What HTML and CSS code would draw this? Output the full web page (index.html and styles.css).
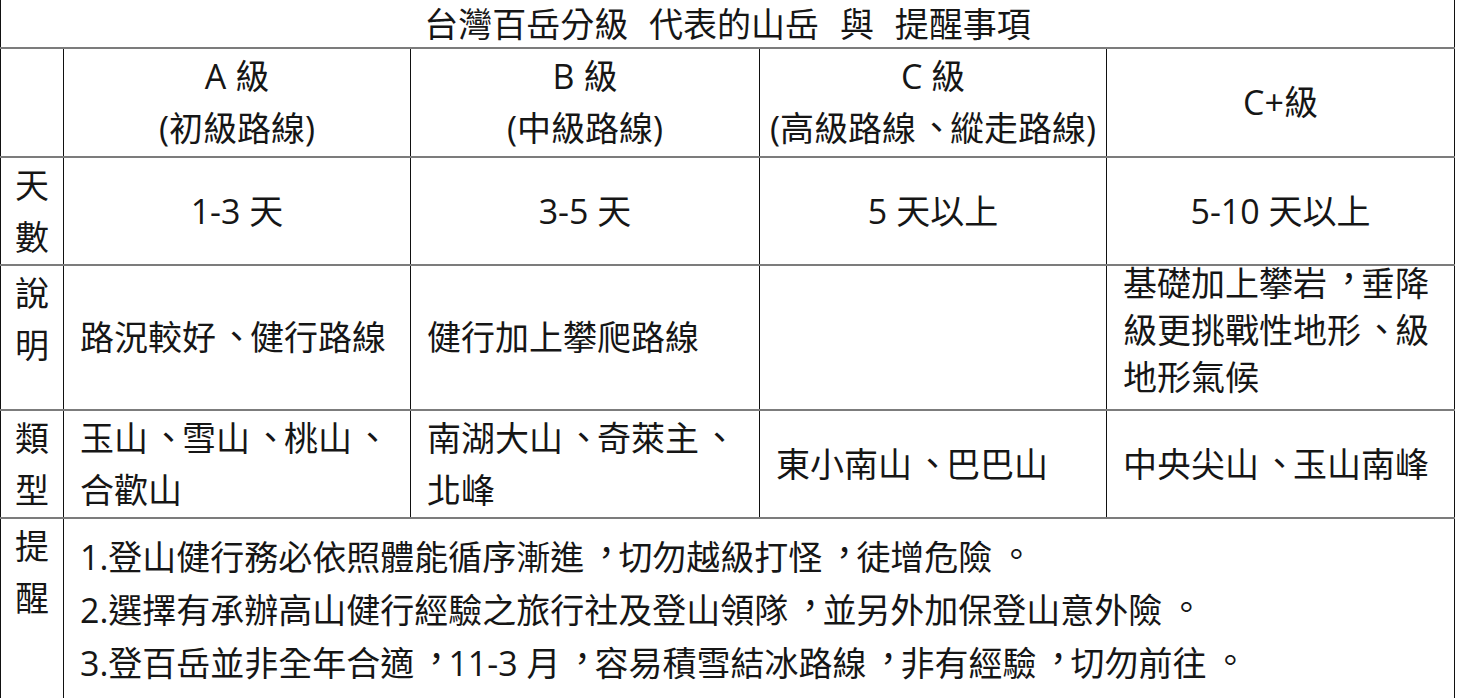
FILE: index.html
```html
<!DOCTYPE html>
<html lang="zh-TW">
<head>
<meta charset="utf-8">
<title>台灣百岳分級</title>
<link rel="stylesheet" href="styles.css">
</head>
<body>
<table class="grade-table">
  <colgroup>
    <col class="col-label">
    <col class="col-a">
    <col class="col-b">
    <col class="col-c">
    <col class="col-cp">
  </colgroup>
  <tr class="row-title">
    <td class="title" colspan="5">台灣百岳分級 代表的山岳 與 提醒事項</td>
  </tr>
  <tr class="row-head">
    <td class="label"></td>
    <td class="center">A 級<br>(初級路線)</td>
    <td class="center">B 級<br>(中級路線)</td>
    <td class="center">C 級<br>(高級路線<span class="dun">、</span>縱走路線)</td>
    <td class="center">C+級</td>
  </tr>
  <tr class="row-days">
    <td class="label">天<br>數</td>
    <td class="center">1-3 天</td>
    <td class="center">3-5 天</td>
    <td class="center">5 天以上</td>
    <td class="center">5-10 天以上</td>
  </tr>
  <tr class="row-desc">
    <td class="label">說<br>明</td>
    <td class="text">路況較好<span class="dun">、</span>健行路線</td>
    <td class="text">健行加上攀爬路線</td>
    <td class="text"></td>
    <td class="text tight"><div class="lift">基礎加上攀岩<span class="comma">，</span>垂降<br>級更挑戰性地形<span class="dun">、</span>級<br>地形氣候</div></td>
  </tr>
  <tr class="row-type">
    <td class="label">類<br>型</td>
    <td class="text">玉山<span class="dun">、</span>雪山<span class="dun">、</span>桃山<span class="dun">、</span><br>合歡山</td>
    <td class="text">南湖大山<span class="dun">、</span>奇萊主<span class="dun">、</span><br>北峰</td>
    <td class="text">東小南山<span class="dun">、</span>巴巴山</td>
    <td class="text">中央尖山<span class="dun">、</span>玉山南峰</td>
  </tr>
  <tr class="row-note">
    <td class="label">提<br>醒</td>
    <td class="notes" colspan="4">1.登山健行務必依照體能循序漸進<span class="comma">，</span>切勿越級打怪<span class="comma">，</span>徒增危險<span class="period">。</span><br>2.選擇有承辦高山健行經驗之旅行社及登山領隊<span class="comma">，</span>並另外加保登山意外險<span class="period">。</span><br>3.登百岳並非全年合適<span class="comma">，</span>11-3 月<span class="comma">，</span>容易積雪結冰路線<span class="comma">，</span>非有經驗<span class="comma">，</span>切勿前往<span class="period">。</span></td>
  </tr>
</table>
</body>
</html>
```

FILE: styles.css
```css
html, body {
  margin: 0;
  padding: 0;
  background: #ffffff;
}

body {
  font-family: "Open Sans", "Noto Sans CJK TC", sans-serif;
  font-size: 34px;
  color: #161616;
  width: 1460px;
  height: 698px;
  overflow: hidden;
}

.grade-table {
  border-collapse: collapse;
  table-layout: fixed;
  width: 1455px;
}

.col-label { width: 63px; }
.col-a { width: 347px; }
.col-b { width: 349px; }
.col-c { width: 347px; }
.col-cp { width: 348px; }

.grade-table td {
  border-top: 2px solid #7c7c7c;
  border-bottom: 2px solid #7c7c7c;
  border-left: 1px solid #111111;
  border-right: 1px solid #111111;
  padding: 0;
  line-height: 52px;
  vertical-align: middle;
  white-space: nowrap;
}

.row-title td {
  border-top: none;
  height: 47px;
  text-align: center;
  line-height: 46px;
  word-spacing: 12px;
}

.row-head td { height: 105.5px; }
.row-days td { height: 105px; }
.row-desc td { height: 142.5px; }
.row-type td { height: 105px; }
.row-note td { height: 176px; }

.label {
  text-align: center;
  vertical-align: top !important;
  padding-top: 1px !important;
}

.center {
  text-align: center;
}

.text {
  text-align: left;
  padding-left: 16px !important;
}

.tight {
  line-height: 47px !important;
  vertical-align: top !important;
}

.lift {
  margin-top: -6px;
}

.notes {
  text-align: left;
  vertical-align: top !important;
  padding: 12px 0 0 16px !important;
  line-height: 53px !important;
}

.comma {
  display: inline-block;
  transform: translate(0.14em, -0.14em);
}

.period {
  display: inline-block;
  transform: translate(0.2em, -0.1em);
}

.dun {
  display: inline-block;
  transform: translate(0.1em, -0.04em);
}
```
